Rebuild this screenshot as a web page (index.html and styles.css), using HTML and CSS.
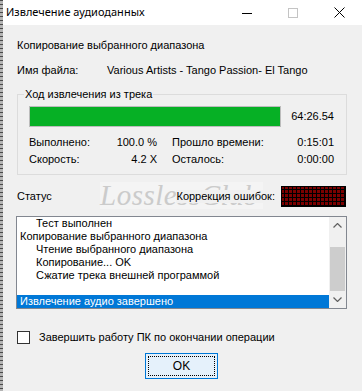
FILE: index.html
```html
<!doctype html>
<html lang="ru">

<head>
    <title>Извлечение аудиоданных</title>
    <meta charset="utf-8" />
    <link rel="stylesheet" href="styles.css">
</head>

<body>
    <div class="window">
        <div class="titlebar">
            <span class="title">Извлечение аудиоданных</span>
            <div class="controls">
                <span class="ctl">
                    <svg width="10" height="10" viewBox="0 0 10 10"><path d="M0 5.5h10" stroke="#000" stroke-width="1" /></svg>
                </span>
                <span class="ctl">
                    <svg width="10" height="10" viewBox="0 0 10 10"><rect x="0.5" y="0.5" width="9" height="9" fill="none" stroke="#c4c4c4" stroke-width="1" /></svg>
                </span>
                <span class="ctl">
                    <svg width="11" height="11" viewBox="0 0 11 11"><path d="M0.5 0.5l10 10M10.5 0.5l-10 10" stroke="#000" stroke-width="1" /></svg>
                </span>
            </div>
        </div>

        <div class="content">
            <p class="caption">Копирование выбранного диапазона</p>

            <div class="file-row">
                <span class="file-label">Имя файла:</span>
                <span>Various Artists - Tango Passion- El Tango</span>
            </div>

            <fieldset class="group">
                <legend>Ход извлечения из трека</legend>
                <div class="group-body">
                    <div class="progress-row">
                        <div class="progress"><div class="progress-fill" style="width: 100%"></div></div>
                        <span class="track-time">64:26.54</span>
                    </div>
                    <div class="stats">
                        <div class="stat"><span>Выполнено:</span><span>100.0 %</span></div>
                        <div class="stat"><span>Прошло времени:</span><span>0:15:01</span></div>
                        <div class="stat"><span>Скорость:</span><span>4.2 X</span></div>
                        <div class="stat"><span>Осталось:</span><span>0:00:00</span></div>
                    </div>
                </div>
            </fieldset>

            <div class="status-row">
                <span>Статус</span>
                <div class="watermark">LosslessClub</div>
                <span class="ecc-label">Коррекция ошибок:</span>
                <div class="led"></div>
            </div>

            <div class="listbox">
                <ul class="log">
                    <li class="sub">Тест выполнен</li>
                    <li>Копирование выбранного диапазона</li>
                    <li class="sub">Чтение выбранного диапазона</li>
                    <li class="sub">Копирование... OK</li>
                    <li class="sub">Сжатие трека внешней программой</li>
                    <li>&nbsp;</li>
                    <li class="selected">Извлечение аудио завершено</li>
                </ul>
                <div class="scrollbar">
                    <span class="arrow">
                        <svg width="9" height="5" viewBox="0 0 9 5"><path d="M0.5 4.5l4-4 4 4" fill="none" stroke="#606060" stroke-width="1.2" /></svg>
                    </span>
                    <span class="track"></span>
                    <span class="thumb"></span>
                    <span class="arrow">
                        <svg width="9" height="5" viewBox="0 0 9 5"><path d="M0.5 0.5l4 4 4-4" fill="none" stroke="#606060" stroke-width="1.2" /></svg>
                    </span>
                </div>
            </div>

            <label class="check">
                <span class="box"></span>
                Завершить работу ПК по окончании операции
            </label>

            <div class="actions">
                <button class="ok"><span>OK</span></button>
            </div>
        </div>
    </div>
</body>

</html>
```

FILE: styles.css
```css
html,
body {
    margin: 0;
    height: 100%;
}

body {
    background: repeating-linear-gradient(to bottom, #4a4a4a 0 1px, #b4b4b4 1px 4px);
    font-family: "Liberation Sans", Arial, sans-serif;
    font-size: 11px;
    line-height: 13px;
    color: #000;
    overflow: hidden;
}

.window {
    margin-left: 3px;
    height: 391px;
    background-color: #f0f0f0;
}

/* title bar */

.titlebar {
    display: flex;
    align-items: center;
    height: 25px;
    background-color: #fff;
}

.title {
    flex: 1;
    padding-left: 3px;
    font-family: "Noto Sans", sans-serif;
    font-size: 11px;
    line-height: 16px;
    padding-bottom: 1px;
}

.controls {
    display: flex;
    height: 100%;
}

.ctl {
    display: flex;
    align-items: center;
    justify-content: center;
    width: 46px;
    height: 100%;
}

.ctl svg {
    display: block;
}

/* dialog body */

.content {
    padding: 0 15px 0 14px;
}

.caption {
    margin: 14px 0 0;
}

.file-row {
    display: flex;
    margin-top: 12px;
}

.file-label {
    width: 90px;
}

.group {
    margin: 11px 0 0;
    padding: 0;
    border: 1px solid #dcdcdc;
    min-width: 0;
}

.group legend {
    margin-left: 6px;
    padding: 0 1px;
}

.group-body {
    padding: 5px 12px 8px 11px;
}

.progress-row {
    display: flex;
    align-items: center;
}

.progress {
    width: 252px;
    height: 19px;
    border: 1px solid #bcbcbc;
    background-color: #e6e6e6;
}

.progress-fill {
    height: 100%;
    background-color: #06b025;
}

.track-time {
    margin-left: 10px;
}

.stats {
    display: grid;
    grid-template-columns: 128px 162px;
    column-gap: 15px;
    row-gap: 4px;
    margin-top: 9px;
}

.stat {
    display: flex;
    justify-content: space-between;
}

/* status line */

.status-row {
    position: relative;
    display: flex;
    align-items: center;
    margin-top: 11px;
}

.watermark {
    position: absolute;
    left: 83px;
    top: -4px;
    width: 163px;
    height: 27px;
    background-color: #f4f4f4;
    font-family: "Liberation Serif", serif;
    font-style: italic;
    font-size: 29px;
    line-height: 27px;
    letter-spacing: 0.5px;
    color: #cbcbcb;
    white-space: nowrap;
}

.ecc-label {
    position: relative;
    margin-left: auto;
    margin-right: 6px;
    background-color: #f0f0f0;
}

.led {
    width: 64px;
    height: 20px;
    padding: 1px 0 0 1px;
    background-color: #000;
    background-clip: content-box;
    background-image:
        repeating-linear-gradient(to bottom, transparent 0 3px, #000 3px 4px),
        repeating-linear-gradient(to right, #7b0000 0 3px, #000 3px 4px);
    margin-right: 1px;
    outline: 1px solid #000;
    outline-offset: -1px;
}

/* log list */

.listbox {
    display: flex;
    margin: 9px 0 0 -1px;
    height: 91px;
    border: 1px solid #828790;
    background-color: #fff;
}

.log {
    flex: 1;
    margin: 0;
    padding: 0;
    list-style: none;
}

.log li {
    height: 13px;
    padding-left: 3px;
    white-space: nowrap;
}

.log li.sub {
    padding-left: 19px;
}

.log li.selected {
    background-color: #0078d7;
    color: #fff;
}

.scrollbar {
    display: flex;
    flex-direction: column;
    width: 17px;
    background-color: #f0f0f0;
}

.scrollbar .arrow {
    display: flex;
    align-items: center;
    justify-content: center;
    height: 17px;
}

.scrollbar .track {
    flex: 1;
}

.scrollbar .thumb {
    height: 44px;
    margin: 0 1px;
    background-color: #cdcdcd;
}

/* bottom */

.check {
    display: flex;
    align-items: center;
    gap: 9px;
    margin-top: 22px;
}

.check .box {
    width: 11px;
    height: 11px;
    border: 1px solid #333;
    background-color: #fff;
}

.actions {
    display: flex;
    justify-content: center;
    margin-top: 9px;
}

.ok {
    width: 73px;
    height: 26px;
    margin-left: -1px;
    padding: 2px;
    border: 1px solid #0078d7;
    background-color: #e5f1fb;
    font-family: "Liberation Sans", Arial, sans-serif;
    font-size: 12px;
    color: #000;
}

.ok span {
    display: flex;
    align-items: center;
    justify-content: center;
    height: 100%;
    border: 1px dotted #000;
    box-sizing: border-box;
}
```
